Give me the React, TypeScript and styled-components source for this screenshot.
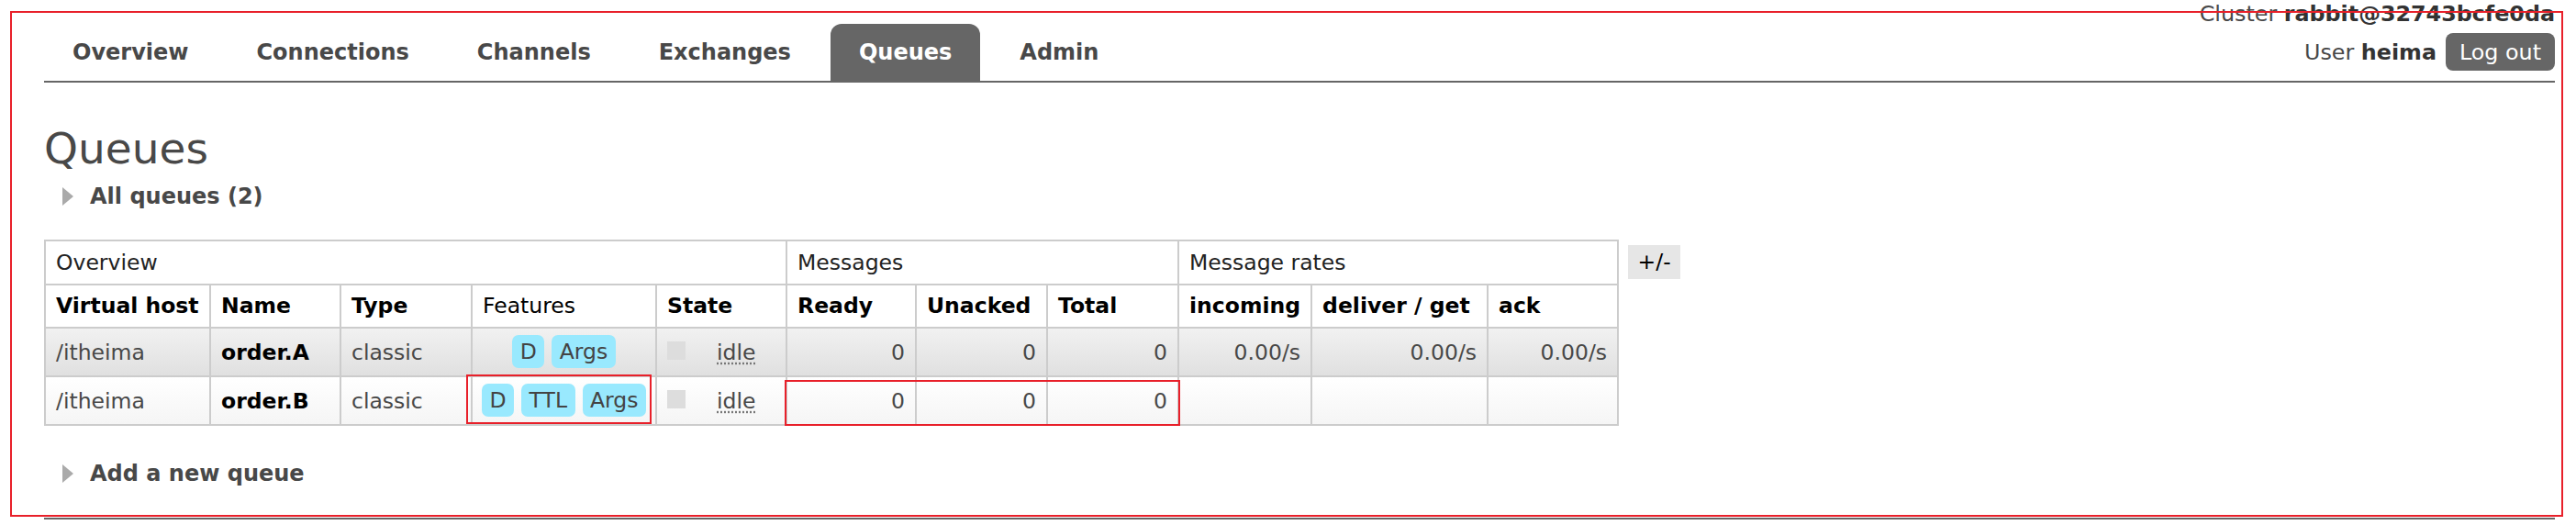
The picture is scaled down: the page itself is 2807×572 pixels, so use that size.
import React from 'react';
import styled, { createGlobalStyle } from 'styled-components';

const GlobalStyle = createGlobalStyle`
  html, body {
    margin: 0;
    padding: 0;
    background: #fff;
  }
  body {
    font-family: 'DejaVu Sans', Verdana, sans-serif;
    font-size: 23.5px;
    color: #484848;
  }
`;

const Page = styled.div`
  position: relative;
  width: 2807px;
  height: 572px;
  padding: 0 23px 0 48px;
  box-sizing: border-box;
  overflow: hidden;
`;

const Header = styled.header`
  display: flex;
  justify-content: space-between;
  height: 88px;
  border-bottom: 2px solid #666;
`;

const Tabs = styled.ul`
  display: flex;
  align-items: flex-end;
  gap: 12px;
  margin: 0;
  padding: 0;
  list-style: none;
`;

const Tab = styled.li<{ $active?: boolean }>`
  height: 62px;
  padding: 0 31px;
  display: flex;
  align-items: center;
  font-size: 24px;
  font-weight: bold;
  border-radius: 12px 12px 0 0;
  background: ${({ $active }) => ($active ? '#666' : 'transparent')};
  color: ${({ $active }) => ($active ? '#fff' : '#484848')};
`;

const Session = styled.div`
  display: flex;
  flex-direction: column;
  align-items: flex-end;
  justify-content: space-between;
  padding-bottom: 11px;
  font-size: 23.8px;
`;

const ClusterLine = styled.div`
  margin-top: 1px;
  b {
    color: #333;
  }
`;

const UserLine = styled.div`
  display: flex;
  align-items: center;
  gap: 10px;
  b {
    color: #333;
  }
`;

const LogoutButton = styled.button`
  height: 41px;
  padding: 0 15px;
  border: 0;
  border-radius: 8px;
  background: #666;
  color: #fff;
  font: inherit;
`;

const Title = styled.h1`
  margin: 44px 0 0;
  font-size: 47px;
  font-weight: normal;
  color: #484848;
`;

const Toggle = styled.h2<{ $gap: number }>`
  display: flex;
  align-items: center;
  gap: 18px;
  margin: ${({ $gap }) => $gap}px 0 0;
  padding-left: 20px;
  font-size: 24px;
  font-weight: bold;
  color: #484848;
`;

const Arrow = styled.span`
  width: 0;
  height: 0;
  border-left: 12px solid #aaa;
  border-top: 10px solid transparent;
  border-bottom: 10px solid transparent;
`;

const TableRow = styled.div`
  display: flex;
  align-items: flex-start;
  gap: 10px;
  margin-top: 33px;
`;

const TableWrap = styled.div`
  position: relative;
`;

const Table = styled.table`
  border-collapse: collapse;
  table-layout: fixed;
  width: 1716px;
  line-height: 28px;

  th,
  td {
    border: 2px solid #ccc;
    padding: 0 11px;
    text-align: left;
    vertical-align: middle;
    white-space: nowrap;
  }
`;

const GroupHead = styled.th`
  font-weight: normal;
  color: #222;
  && {
    padding-top: 9px;
    padding-bottom: 9px;
  }
`;

const ColHead = styled.th<{ $plain?: boolean }>`
  font-weight: ${({ $plain }) => ($plain ? 'normal' : 'bold')};
  color: #000;
  && {
    padding-top: 8px;
    padding-bottom: 9px;
  }
`;

const Cell = styled.td<{ $odd: boolean; $align?: 'left' | 'right' | 'center'; $strong?: boolean; $tight?: boolean }>`
  background: ${({ $odd }) =>
    $odd ? 'linear-gradient(#f1f1f1, #e0e0e0)' : 'linear-gradient(#ffffff, #f5f5f5)'};
  color: ${({ $strong }) => ($strong ? '#000' : '#484848')};
  font-weight: ${({ $strong }) => ($strong ? 'bold' : 'normal')};
  && {
    text-align: ${({ $align }) => $align || 'left'};
    padding-top: ${({ $tight }) => ($tight ? 7 : 11.5)}px;
    padding-bottom: ${({ $tight }) => ($tight ? 8 : 11.5)}px;
  }
`;

const Badges = styled.div`
  display: flex;
  justify-content: center;
  gap: 8px;
`;

const Badge = styled.span`
  height: 36px;
  line-height: 36px;
  padding: 0 8.5px;
  border-radius: 7px;
  background: #99e9fe;
  color: #444;
`;

const StatusBox = styled.span`
  display: inline-block;
  width: 20px;
  height: 20px;
  background: #ddd;
  vertical-align: middle;
  margin-top: -6px;
`;

const Idle = styled.abbr`
  margin-left: 34px;
  text-decoration: underline dotted #777;
  text-underline-offset: 4px;
`;

const ColumnsButton = styled.span`
  margin-top: 6px;
  height: 37px;
  line-height: 37px;
  padding: 0 10.5px;
  background: #e6e6e6;
  color: #000;
`;

const Footer = styled.div`
  margin-top: 34px;
  border-top: 2px solid #666;
`;

const Mark = styled.div<{ $left: number; $top: number; $w: number; $h: number }>`
  position: absolute;
  left: ${({ $left }) => $left}px;
  top: ${({ $top }) => $top}px;
  width: ${({ $w }) => $w}px;
  height: ${({ $h }) => $h}px;
  border: 2px solid #e8202a;
  box-sizing: border-box;
  pointer-events: none;
`;

const tabs = ['Overview', 'Connections', 'Channels', 'Exchanges', 'Queues', 'Admin'];

const colWidths = [180, 142, 143, 201, 142, 141, 143, 143, 145, 192, 142];

const columns = [
  { label: 'Virtual host' },
  { label: 'Name' },
  { label: 'Type' },
  { label: 'Features', plain: true },
  { label: 'State' },
  { label: 'Ready' },
  { label: 'Unacked' },
  { label: 'Total' },
  { label: 'incoming' },
  { label: 'deliver / get' },
  { label: 'ack' },
];

const queues = [
  { vhost: '/itheima', name: 'order.A', type: 'classic', features: ['D', 'Args'], rates: ['0.00/s', '0.00/s', '0.00/s'] },
  { vhost: '/itheima', name: 'order.B', type: 'classic', features: ['D', 'TTL', 'Args'], rates: ['', '', ''] },
];

export default function App() {
  return (
    <>
      <GlobalStyle />
      <Page>
        <Header>
          <Tabs>
            {tabs.map((t) => (
              <Tab key={t} $active={t === 'Queues'}>
                {t}
              </Tab>
            ))}
          </Tabs>
          <Session>
            <ClusterLine>
              Cluster <b>rabbit@32743bcfe0da</b>
            </ClusterLine>
            <UserLine>
              <span>
                User <b>heima</b>
              </span>
              <LogoutButton>Log out</LogoutButton>
            </UserLine>
          </Session>
        </Header>

        <Title>Queues</Title>
        <Toggle $gap={11}>
          <Arrow />
          All queues (2)
        </Toggle>

        <TableRow>
          <TableWrap>
            <Table>
              <colgroup>
                {colWidths.map((w, i) => (
                  <col key={i} style={{ width: w }} />
                ))}
              </colgroup>
              <thead>
                <tr>
                  <GroupHead colSpan={5}>Overview</GroupHead>
                  <GroupHead colSpan={3}>Messages</GroupHead>
                  <GroupHead colSpan={3}>Message rates</GroupHead>
                </tr>
                <tr>
                  {columns.map((c) => (
                    <ColHead key={c.label} $plain={c.plain}>
                      {c.label}
                    </ColHead>
                  ))}
                </tr>
              </thead>
              <tbody>
                {queues.map((q, i) => {
                  const odd = i % 2 === 0;
                  return (
                    <tr key={q.name}>
                      <Cell $odd={odd}>{q.vhost}</Cell>
                      <Cell $odd={odd} $strong>
                        {q.name}
                      </Cell>
                      <Cell $odd={odd}>{q.type}</Cell>
                      <Cell $odd={odd} $tight>
                        <Badges>
                          {q.features.map((f) => (
                            <Badge key={f}>{f}</Badge>
                          ))}
                        </Badges>
                      </Cell>
                      <Cell $odd={odd}>
                        <StatusBox />
                        <Idle>idle</Idle>
                      </Cell>
                      <Cell $odd={odd} $align="right">0</Cell>
                      <Cell $odd={odd} $align="right">0</Cell>
                      <Cell $odd={odd} $align="right">0</Cell>
                      {q.rates.map((r, j) => (
                        <Cell key={j} $odd={odd} $align="right">
                          {r}
                        </Cell>
                      ))}
                    </tr>
                  );
                })}
              </tbody>
            </Table>
            <Mark $left={460} $top={147} $w={202} $h={54} />
            <Mark $left={807} $top={153} $w={431} $h={50} />
          </TableWrap>
          <ColumnsButton>+/-</ColumnsButton>
        </TableRow>

        <Toggle $gap={38}>
          <Arrow />
          Add a new queue
        </Toggle>

        <Footer />
        <Mark $left={11} $top={12} $w={2782} $h={551} />
      </Page>
    </>
  );
}
